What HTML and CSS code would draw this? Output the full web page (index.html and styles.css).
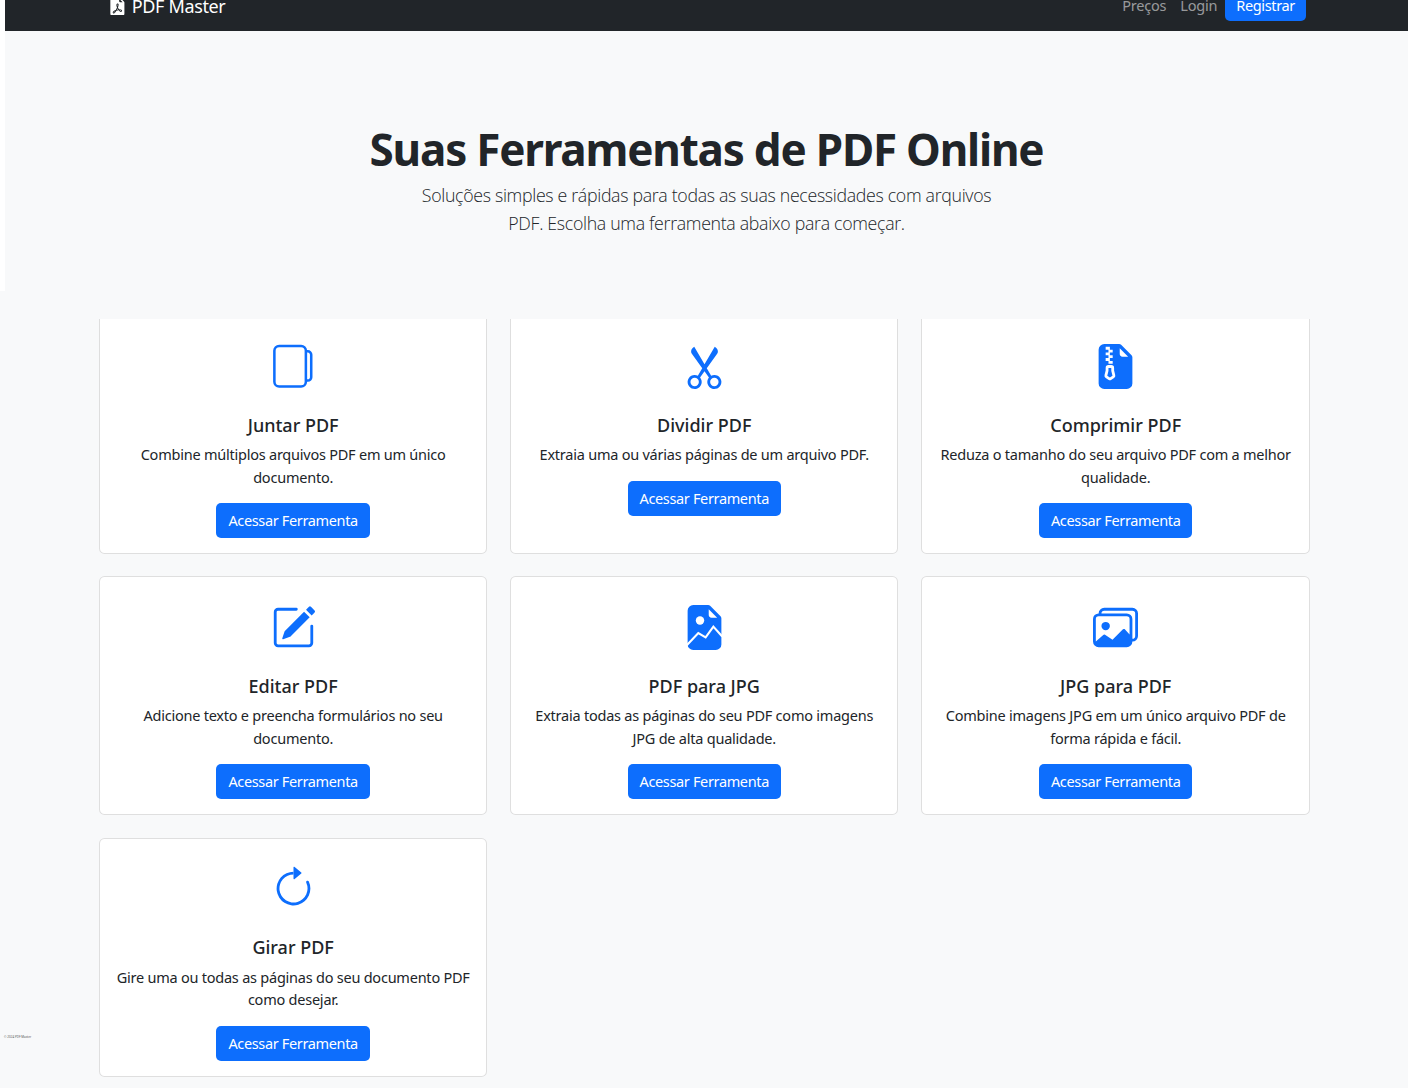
FILE: index.html
```html
<!DOCTYPE html>
<html lang="pt-BR">

<head>
    <meta charset="UTF-8">
    <meta name="viewport" content="width=device-width, initial-scale=1.0">
    <title>PDF Master</title>
    <link rel="stylesheet" href="styles.css">
</head>

<body>

    <header class="top">
        <nav class="navbar">
            <div class="navbar-inner">
                <a class="brand" href="#">
                    <svg class="brand-icon" viewBox="0 0 16 16" fill="currentColor">
                        <path d="M5.523 12.424c.14-.082.293-.162.459-.238a7.878 7.878 0 0 1-.45.606c-.28.337-.498.516-.635.572a.266.266 0 0 1-.035.012.282.282 0 0 1-.026-.044c-.056-.11-.054-.216.04-.36.106-.165.319-.354.647-.548zm2.455-1.647c-.119.025-.237.05-.356.078a21.148 21.148 0 0 0 .5-1.05 12.045 12.045 0 0 0 .51.858c-.217.032-.436.07-.654.114zm2.525.939a3.881 3.881 0 0 1-.435-.41c.228.005.434.022.612.054.317.057.466.147.518.209a.095.095 0 0 1 .026.064.436.436 0 0 1-.06.2.307.307 0 0 1-.094.124.107.107 0 0 1-.069.015c-.09-.003-.258-.066-.498-.256zM8.278 6.97c-.04.244-.108.524-.2.829a4.86 4.86 0 0 1-.089-.346c-.076-.353-.087-.63-.046-.822.038-.177.11-.248.196-.283a.517.517 0 0 1 .145-.04c.013.03.028.092.032.198.005.122-.007.277-.038.465z"/>
                        <path fill-rule="evenodd" d="M4 0h5.293A1 1 0 0 1 10 .293L13.707 4a1 1 0 0 1 .293.707V14a2 2 0 0 1-2 2H4a2 2 0 0 1-2-2V2a2 2 0 0 1 2-2zm5.5 1.5v2a1 1 0 0 0 1 1h2l-3-3zM4.165 13.668c.09.18.23.343.438.419.207.075.412.04.58-.03.318-.13.635-.436.926-.786.333-.401.683-.927 1.021-1.51a11.651 11.651 0 0 1 1.997-.406c.3.383.61.713.91.95.28.22.603.403.934.417a.856.856 0 0 0 .51-.138c.155-.101.27-.247.354-.416.09-.181.145-.37.138-.563a.844.844 0 0 0-.2-.518c-.226-.27-.596-.4-.96-.465a5.76 5.76 0 0 0-1.335-.05 10.954 10.954 0 0 1-.98-1.686c.25-.66.437-1.284.52-1.794.036-.218.055-.426.048-.614a1.238 1.238 0 0 0-.127-.538.7.7 0 0 0-.477-.365c-.202-.043-.41 0-.601.077-.377.15-.576.47-.651.823-.073.34-.04.736.046 1.136.088.406.238.848.43 1.295a19.697 19.697 0 0 1-1.062 2.227 7.662 7.662 0 0 0-1.482.645c-.37.22-.699.48-.897.787-.21.326-.275.714-.08 1.103z"/>
                    </svg>
                    PDF Master
                </a>
                <div class="nav-links">
                    <a class="nav-link" href="#">Preços</a>
                    <a class="nav-link" href="#">Login</a>
                    <a class="btn btn-nav" href="#">Registrar</a>
                </div>
            </div>
        </nav>

        <section class="hero">
            <h1>Suas Ferramentas de PDF Online</h1>
            <p class="lead">Soluções simples e rápidas para todas as suas necessidades com arquivos PDF. Escolha uma ferramenta abaixo para começar.</p>
        </section>
    </header>

    <main class="tools">
        <div class="card card-cut">
            <svg class="card-icon" viewBox="0 0 16 16" fill="none" stroke="currentColor" stroke-width=".9">
                <rect x="1.2" y=".7" width="11.2" height="14.4" rx="1.7"/>
                <path d="M12.6 2.6h.5a1.2 1.2 0 0 1 1.2 1.2v8a1.2 1.2 0 0 1-1.2 1.2h-.5"/>
            </svg>
            <h2>Juntar PDF</h2>
            <p>Combine múltiplos arquivos PDF em um único documento.</p>
            <a class="btn" href="#">Acessar Ferramenta</a>
        </div>

        <div class="card card-cut">
            <svg class="card-icon" viewBox="0 0 16 16" fill="currentColor">
                <path d="M3.5 3.5c-.614-.884-.074-1.962.858-2.5L8 7.226 11.642 1c.932.538 1.472 1.616.858 2.5L8.81 8.61l1.556 2.661a2.5 2.5 0 1 1-.794.637L8 9.73l-1.572 2.177a2.5 2.5 0 1 1-.794-.637L7.19 8.61 3.5 3.5zm2.5 10a1.5 1.5 0 1 0-3 0 1.5 1.5 0 0 0 3 0zm7 0a1.5 1.5 0 1 0-3 0 1.5 1.5 0 0 0 3 0z"/>
            </svg>
            <h2>Dividir PDF</h2>
            <p>Extraia uma ou várias páginas de um arquivo PDF.</p>
            <a class="btn" href="#">Acessar Ferramenta</a>
        </div>

        <div class="card card-cut">
            <svg class="card-icon" viewBox="0 0 16 16" fill="currentColor">
                <path d="M5.5 9.438V8.5h1v.938a1 1 0 0 0 .03.243l.4 1.598-.93.62-.93-.62.4-1.598a1 1 0 0 0 .03-.243z"/>
                <path d="M9.293 0H4a2 2 0 0 0-2 2v12a2 2 0 0 0 2 2h8a2 2 0 0 0 2-2V4.707A1 1 0 0 0 13.707 4L10 .293A1 1 0 0 0 9.293 0zM9.5 3.5v-2l3 3h-2a1 1 0 0 1-1-1zm-4-.5V2h-1V1H6v1h1v1H6v1h1v1H6v1h1v1H5.5V6h-1V5h1V4h-1V3h1zm0 4.5h1a1 1 0 0 1 1 1v.938l.4 1.599a1 1 0 0 1-.416 1.074l-.93.62a1 1 0 0 1-1.109 0l-.93-.62a1 1 0 0 1-.415-1.074l.4-1.599V8.5a1 1 0 0 1 1-1z"/>
            </svg>
            <h2>Comprimir PDF</h2>
            <p>Reduza o tamanho do seu arquivo PDF com a melhor qualidade.</p>
            <a class="btn" href="#">Acessar Ferramenta</a>
        </div>

        <div class="card">
            <svg class="card-icon" viewBox="0 0 16 16" fill="currentColor">
                <path d="M15.502 1.94a.5.5 0 0 1 0 .706L14.459 3.69l-2-2L13.502.646a.5.5 0 0 1 .707 0l1.293 1.293zm-1.75 2.456-2-2L4.939 9.21a.5.5 0 0 0-.121.196l-.805 2.414a.25.25 0 0 0 .316.316l2.414-.805a.5.5 0 0 0 .196-.12l6.813-6.814z"/>
                <path fill-rule="evenodd" d="M1 13.5A1.5 1.5 0 0 0 2.5 15h11a1.5 1.5 0 0 0 1.5-1.5v-6a.5.5 0 0 0-1 0v6a.5.5 0 0 1-.5.5h-11a.5.5 0 0 1-.5-.5v-11a.5.5 0 0 1 .5-.5H9a.5.5 0 0 0 0-1H2.5A1.5 1.5 0 0 0 1 2.5v11z"/>
            </svg>
            <h2>Editar PDF</h2>
            <p>Adicione texto e preencha formulários no seu documento.</p>
            <a class="btn" href="#">Acessar Ferramenta</a>
        </div>

        <div class="card">
            <svg class="card-icon" viewBox="0 0 16 16" fill="currentColor">
                <path fill-rule="evenodd" d="M4 0h5.293A1 1 0 0 1 10 .293L13.707 4a1 1 0 0 1 .293.707V14a2 2 0 0 1-2 2H4a2 2 0 0 1-2-2V2a2 2 0 0 1 2-2zm5.5 1.5v2a1 1 0 0 0 1 1h2l-3-3z"/>
                <circle cx="6.4" cy="5.5" r="1.5" fill="#ffffff"/>
                <path d="M1.7 14.3 5.8 10l2.6 1.5 2.75-3.8 3.15 3.5" fill="none" stroke="#ffffff" stroke-width=".75"/>
            </svg>
            <h2>PDF para JPG</h2>
            <p>Extraia todas as páginas do seu PDF como imagens JPG de alta qualidade.</p>
            <a class="btn" href="#">Acessar Ferramenta</a>
        </div>

        <div class="card">
            <svg class="card-icon" viewBox="0 0 16 16" fill="currentColor">
                <path d="M4.502 9a1.5 1.5 0 1 0 0-3 1.5 1.5 0 0 0 0 3z"/>
                <path d="M14.002 13a2 2 0 0 1-2 2h-10a2 2 0 0 1-2-2V5A2 2 0 0 1 2 3a2 2 0 0 1 2-2h10a2 2 0 0 1 2 2v8a2 2 0 0 1-1.998 2zM14 2H4a1 1 0 0 0-1 1h9.002a2 2 0 0 1 2 2v7A1 1 0 0 0 15 11V3a1 1 0 0 0-1-1zM2.002 4a1 1 0 0 0-1 1v8l2.646-2.354a.5.5 0 0 1 .63-.062l2.66 1.773 3.71-3.71a.5.5 0 0 1 .577-.094l1.777 1.947V5a1 1 0 0 0-1-1h-10z"/>
            </svg>
            <h2>JPG para PDF</h2>
            <p>Combine imagens JPG em um único arquivo PDF de forma rápida e fácil.</p>
            <a class="btn" href="#">Acessar Ferramenta</a>
        </div>

        <div class="card">
            <svg class="card-icon" viewBox="0 0 16 16" fill="currentColor">
                <path fill-rule="evenodd" d="M8 3a5 5 0 1 0 4.546 2.914.5.5 0 0 1 .908-.417A6 6 0 1 1 8 2v1z"/>
                <path d="M8 4.466V.534a.25.25 0 0 1 .41-.192l2.36 1.966c.12.1.12.284 0 .384L8.41 4.658A.25.25 0 0 1 8 4.466z"/>
            </svg>
            <h2>Girar PDF</h2>
            <p>Gire uma ou todas as páginas do seu documento PDF como desejar.</p>
            <a class="btn" href="#">Acessar Ferramenta</a>
        </div>
    </main>

    <footer class="footer-tiny">© 2024 PDF Master</footer>

</body>

</html>
```

FILE: styles.css
```css
* {
    box-sizing: border-box;
}

body {
    font-family: "Noto Sans", "Open Sans", Arial, sans-serif;
    font-size: 15px;
    line-height: 1.5;
    background-color: #ffffff;
    color: #212529;
    margin: 0;
    height: 1088px;
    overflow: hidden;
    position: relative;
}

a {
    text-decoration: none;
}

.top {
    margin-left: 5px;
}

.navbar {
    background-color: #212529;
    height: 31px;
    overflow: hidden;
    padding: 0 102px 0 105px;
}

.navbar-inner {
    display: flex;
    justify-content: space-between;
    align-items: center;
    height: 30px;
    margin-top: -9px;
}

.brand {
    display: flex;
    align-items: center;
    gap: 5px;
    color: #ffffff;
    font-size: 18px;
    letter-spacing: -0.35px;
}

.brand-icon {
    width: 18.75px;
    height: 18.75px;
    margin-left: -2px;
}

.nav-links {
    display: flex;
    align-items: center;
}

.nav-link {
    color: rgba(255, 255, 255, 0.55);
    font-size: 14.5px;
    letter-spacing: -0.2px;
    margin-right: 14px;
}

.nav-link + .nav-link {
    margin-right: 8px;
}

.btn {
    display: inline-block;
    background-color: #0d6efd;
    color: #ffffff;
    padding: 6px 12px;
    height: 35px;
    line-height: 23px;
    border-radius: 5px;
    font-size: 14.5px;
    letter-spacing: -0.35px;
}

.btn-nav {
    height: 30px;
    line-height: 28px;
    padding: 0 11px;
}

.hero {
    background-color: #f8f9fa;
    height: 260px;
    padding-top: 91px;
    text-align: center;
}

h1 {
    font-size: 44px;
    line-height: 54px;
    font-weight: 700;
    margin: 0 0 5px;
    letter-spacing: -1.2px;
}

.lead {
    font-family: "Open Sans", "Noto Sans", sans-serif;
    font-size: 17.75px;
    font-weight: 300;
    line-height: 28px;
    letter-spacing: -0.32px;
    max-width: 600px;
    margin: 0 auto;
}

.tools {
    background-color: #f8f9fa;
    height: 797px;
    padding: 28px 0 0 99px;
    display: grid;
    grid-template-columns: 388.3px 388.3px 389px;
    grid-template-rows: 235px 239px 239px;
    column-gap: 22.8px;
    row-gap: 22.3px;
}

.card {
    background-color: #ffffff;
    border: 1px solid rgba(0, 0, 0, 0.125);
    border-radius: 5.6px;
    padding: 27.6px 12px 15px;
    text-align: center;
}

/* first row is cut off at the top in the capture */
.card-cut {
    border-top: none;
    border-radius: 0 0 5.6px 5.6px;
    padding-top: 24.6px;
}

.card-icon {
    display: block;
    width: 45px;
    height: 45px;
    margin: 0 auto 25px;
    color: #0d6efd;
}

h2 {
    font-size: 18px;
    font-weight: 500;
    line-height: 22.5px;
    margin: 0 0 7px;
}

.card p {
    font-size: 14.5px;
    line-height: 22.5px;
    margin: 0 0 15px;
    letter-spacing: -0.23px;
}

.footer-tiny {
    position: absolute;
    left: 4px;
    top: 1035px;
    font-size: 3px;
    line-height: 4px;
    color: #555;
}
```
